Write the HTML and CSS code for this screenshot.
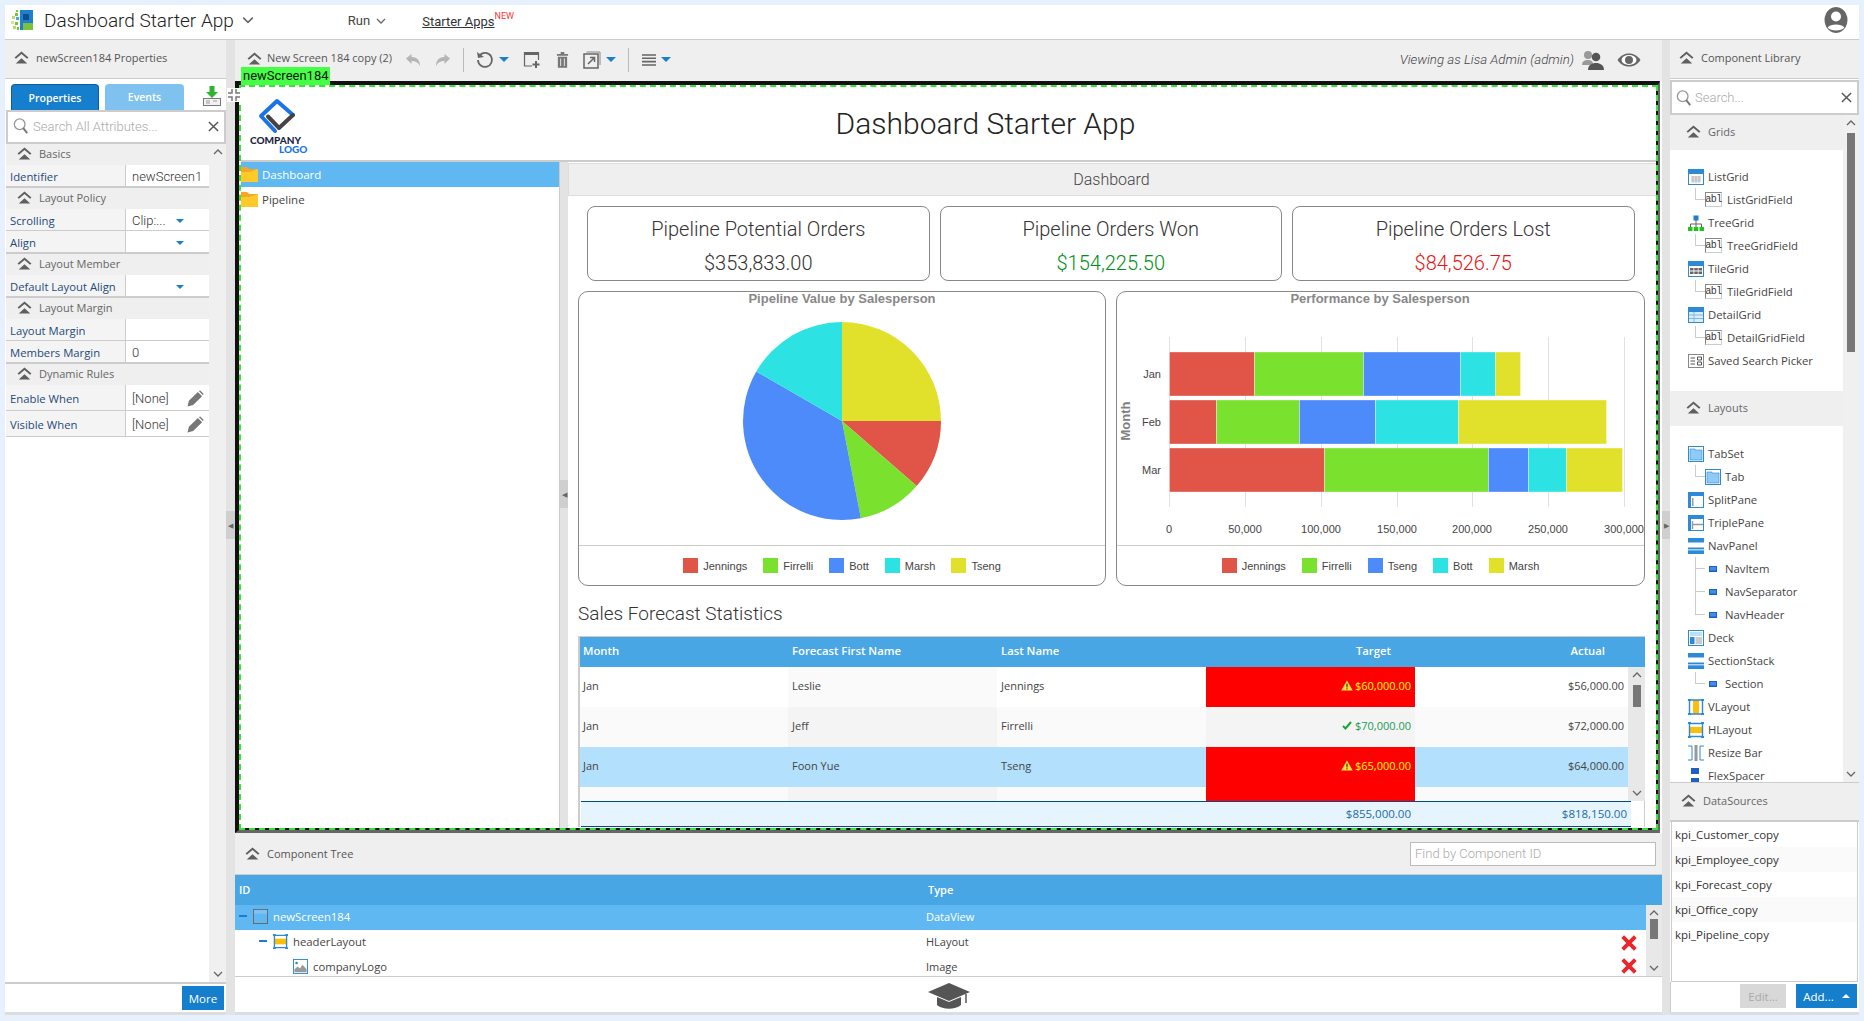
FILE: index.html
```html
<!DOCTYPE html>
<html lang="en">
<head>
<meta charset="utf-8">
<title>Dashboard Starter App</title>
<link rel="stylesheet" href="styles.css">
</head>
<body>
<svg class="defs" aria-hidden="true">
  <symbol id="i-sec" viewBox="0 0 16 14"><path d="M0.500 7 8 0.500 15.500 7 14 8.300 8 3.200 2 8.300Z M1.800 13.500 8 7.800 14.200 13.500Z" fill="#5f5f5f"/></symbol>
  <symbol id="i-search" viewBox="0 0 18 20"><circle cx="7.500" cy="8" r="6" fill="none" stroke="#999" stroke-width="1.500"/><path d="M11.500 12.500 16 18" stroke="#777" stroke-width="2.200" fill="none"/></symbol>
  <symbol id="i-x" viewBox="0 0 12 12"><path d="M1 1 11 11 M11 1 1 11" stroke="#555" stroke-width="1.600" fill="none"/></symbol>
  <symbol id="i-up" viewBox="0 0 10 6"><path d="M1 5 5 1 9 5" stroke="#666" stroke-width="1.300" fill="none"/></symbol>
  <symbol id="i-down" viewBox="0 0 10 6"><path d="M1 1 5 5 9 1" stroke="#666" stroke-width="1.300" fill="none"/></symbol>
  <symbol id="i-pencil" viewBox="0 0 18 18"><path d="M0.500 17.500 2 11.500 11.500 2 16 6.500 6.500 16Z M12.500 1 14 0.500 17.500 4 17 5.500Z" fill="#777"/></symbol>
  <symbol id="i-list" viewBox="0 0 16 16"><rect width="16" height="16" fill="#2c8ad6"/><rect x="1" y="5" width="14" height="10" fill="#fff"/><path d="M3 8h10M3 10h10M3 12h10M5 7v7M8 7v7M11 7v7" stroke="#aaa" stroke-width=".8"/></symbol>
  <symbol id="i-tree" viewBox="0 0 16 16"><rect x="5.500" y="0.500" width="5" height="5" fill="#1c7ed6"/><path d="M8 5v4M2.500 12V9h11v3M8 9v3" stroke="#666" fill="none"/><rect x="0" y="12" width="4.500" height="4" fill="#1fc41f"/><rect x="5.800" y="12" width="4.500" height="4" fill="#1fc41f"/><rect x="11.500" y="12" width="4.500" height="4" fill="#1fc41f"/></symbol>
  <symbol id="i-tile" viewBox="0 0 16 16"><rect width="16" height="16" fill="#2c8ad6"/><rect x="1" y="5" width="14" height="10" fill="#fff"/><path d="M2 7h3.500v2.500H2zM6.300 7h3.500v2.500H6.300zM10.500 7H14v2.500h-3.500zM2 10.500h3.500V13H2zM6.300 10.500h3.500V13H6.300zM10.500 10.500H14V13h-3.500z" fill="#666"/></symbol>
  <symbol id="i-detail" viewBox="0 0 16 16"><rect width="16" height="16" fill="#2c8ad6"/><rect x="1" y="5" width="14" height="10" fill="#dceefb"/><path d="M1 8h14M1 11.500h14M6 5v10" stroke="#7fb9e6"/></symbol>
  <symbol id="i-saved" viewBox="0 0 16 14"><rect x="0.500" y="0.500" width="15" height="13" fill="#fff" stroke="#888"/><path d="M2.500 4H7M2.500 7H7M2.500 10H7M9.500 3h4v3h-4zM9.500 8h4v3h-4z" stroke="#555" fill="none"/></symbol>
  <symbol id="i-tabset" viewBox="0 0 16 16"><rect x="0.500" y="0.500" width="15" height="15" fill="#fff" stroke="#2c8ad6"/><path d="M2 3h5v1h7v10H2z" fill="#8fcbf7" stroke="#2c8ad6" stroke-width=".6"/></symbol>
  <symbol id="i-split" viewBox="0 0 16 16"><rect x="0.500" y="0.500" width="15" height="15" fill="#fff" stroke="#2c8ad6"/><rect width="16" height="4" fill="#2c8ad6"/><rect width="3" height="16" fill="#2c8ad6"/><rect x="4" y="6" width="1.500" height="8" fill="#999"/></symbol>
  <symbol id="i-triple" viewBox="0 0 16 16"><rect x="0.500" y="0.500" width="15" height="15" fill="#fff" stroke="#2c8ad6"/><rect width="16" height="4" fill="#2c8ad6"/><rect width="3" height="16" fill="#2c8ad6"/><path d="M4.500 6v8M5 9.500h10" stroke="#999" stroke-width="1.400"/></symbol>
  <symbol id="i-nav" viewBox="0 0 16 16"><rect width="16" height="16" fill="#2c8ad6"/><rect y="4.500" width="16" height="5" fill="#fff"/><rect y="11" width="16" height="1.500" fill="#a9d4f5"/></symbol>
  <symbol id="i-dot" viewBox="0 0 8 6"><rect width="8" height="6" fill="#1d5fc4"/><rect x="1" y="1" width="6" height="3.500" fill="#3f8cec"/></symbol>
  <symbol id="i-deck" viewBox="0 0 16 16"><rect x="0.500" y="0.500" width="15" height="15" fill="#fff" stroke="#2c8ad6"/><rect x="2" y="2" width="12" height="4" fill="#bde0fa"/><rect x="2" y="7" width="4.500" height="7" fill="#2c8ad6"/><rect x="7.500" y="7" width="6.500" height="7" fill="#ccc"/></symbol>
  <symbol id="i-vlayout" viewBox="0 0 16 16"><rect x="5" y="1" width="6" height="14" fill="#fbbe0a"/><path d="M1.500 1h13M1.500 15h13M1.500 1v14M14.500 1v14" stroke="#2c8ad6" stroke-width="1.400" fill="none"/><path d="M0 0h3v2H0zM13 0h3v2h-3zM0 14h3v2H0zM13 14h3v2h-3z" fill="#2c8ad6"/></symbol>
  <symbol id="i-hlayout" viewBox="0 0 16 16"><rect x="1" y="5" width="14" height="6" fill="#fbbe0a"/><path d="M1 1.500h14M1 14.500h14M1.500 1v14M14.500 1v14" stroke="#2c8ad6" stroke-width="1.400" fill="none"/><path d="M0 0h3v2H0zM13 0h3v2h-3zM0 14h3v2H0zM13 14h3v2h-3z" fill="#2c8ad6"/></symbol>
  <symbol id="i-resize" viewBox="0 0 16 16"><path d="M0 1h4v14H0M16 1h-4v14h4" fill="none" stroke="#2c8ad6"/><rect x="6.500" y="0" width="3" height="16" fill="#999"/></symbol>
  <symbol id="i-flex" viewBox="0 0 16 16"><rect x="3" y="0" width="8" height="6" fill="#1d5fc4"/><rect x="3" y="10" width="8" height="6" fill="#1d5fc4"/></symbol>
  <symbol id="i-dv" viewBox="0 0 16 16"><rect x="0.500" y="0.500" width="15" height="15" fill="none" stroke="#666"/><rect x="1" y="1" width="14" height="4" fill="#7fc2f5"/></symbol>
  <symbol id="i-img" viewBox="0 0 16 16"><rect x="0.500" y="0.500" width="15" height="15" fill="#fff" stroke="#2c8ad6"/><path d="M1.500 14V11L5 8l2.500 2L10 6l4.500 5v3z" fill="#999"/><circle cx="3.800" cy="4.200" r="1.400" fill="#2c8ad6"/></symbol>
  <symbol id="i-redx" viewBox="0 0 14 14"><path d="M1.500 1.500 12.500 12.500 M12.500 1.500 1.500 12.500" stroke="#e8262b" stroke-width="3.400" fill="none"/></symbol>
  <symbol id="i-warn" viewBox="0 0 12 11"><path d="M6 0.500 11.800 10.500H0.200Z" fill="#ffdf3c"/><path d="M5.400 3.500h1.200v4H5.400zM5.400 8.200h1.200v1.200H5.400z" fill="#333"/></symbol>
  <symbol id="i-check" viewBox="0 0 10 9"><path d="M1 5 3.500 7.500 9 1" stroke="#18a53a" stroke-width="2" fill="none"/></symbol>
  <symbol id="i-folder" viewBox="0 0 17 15"><path d="M0 0h6l2 2h9v13H0z" fill="#f6a623"/><path d="M0 5h8l9-3v13H0z" fill="#fdca2a"/></symbol>
</svg>

<div class="app">
  <header class="topbar">
    <svg class="brand" viewBox="0 0 24 24">
      <rect x="10" y="2" width="13" height="20" fill="#1f7fcc"/><rect x="13" y="6" width="6" height="6" fill="#0f4f8f"/><rect x="13" y="15" width="10" height="7" fill="#7ac23c"/>
      <rect x="6" y="2" width="2" height="2" fill="#7ac23c"/><rect x="5" y="5" width="3" height="3" fill="#7ac23c"/><rect x="2" y="8" width="3" height="3" fill="#b7dc6c"/><rect x="6" y="9" width="3" height="3" fill="#47a6e3"/><rect x="1" y="13" width="3" height="3" fill="#d5e88f"/><rect x="5" y="14" width="3" height="3" fill="#7ac23c"/><rect x="3" y="18" width="3" height="3" fill="#b7dc6c"/><rect x="7" y="19" width="2" height="3" fill="#7ac23c"/>
    </svg>
    <span class="app-title">Dashboard Starter App</span>
    <svg class="chev-lg"><use href="#i-down"/></svg>
    <span class="menu">Run</span>
    <svg class="chev-sm"><use href="#i-down"/></svg>
    <span class="starter"><span class="starter-link">Starter Apps</span><sup class="new">NEW</sup></span>
    <svg class="avatar" viewBox="0 0 24 28"><path d="M12 1a11.500 13 0 1 0 .01 0Z" fill="#666"/><circle cx="12" cy="10.500" r="5" fill="#fff"/><path d="M3.500 21.500c3-4 14-4 17 0c-3 4-14 4-17 0Z" fill="#fff"/></svg>
  </header>

  <div class="workspace">
    <aside class="left">
      <div class="panel-head"><svg class="sec"><use href="#i-sec"/></svg>newScreen184 Properties</div>
      <div class="tabs">
        <div class="tab tab-on">Properties</div>
        <div class="tab tab-off">Events</div>
        <svg class="download" viewBox="0 0 18 20"><path d="M6.500 0h5v6H15L9 12 3 6h3.500z" fill="#2fb42f"/><rect x="0.500" y="12.500" width="17" height="7" fill="#f2f2f2" stroke="#777"/><path d="M3 15h4M3 17h4M10 15h4" stroke="#999"/></svg>
      </div>
      <div class="search"><svg class="search-ic"><use href="#i-search"/></svg><span class="placeholder">Search All Attributes...</span><svg class="search-x"><use href="#i-x"/></svg></div>
      <div class="props-wrap">
        <div class="props">
          <div class="sec-row"><svg class="sec"><use href="#i-sec"/></svg>Basics</div>
          <div class="prop end"><span class="lbl">Identifier</span><span class="val">newScreen1</span></div>
          <div class="sec-row"><svg class="sec"><use href="#i-sec"/></svg>Layout Policy</div>
          <div class="prop"><span class="lbl">Scrolling</span><span class="val">Clip:...<i class="tri"></i></span></div>
          <div class="prop end"><span class="lbl">Align</span><span class="val"><i class="tri"></i></span></div>
          <div class="sec-row"><svg class="sec"><use href="#i-sec"/></svg>Layout Member</div>
          <div class="prop end"><span class="lbl">Default Layout Align</span><span class="val"><i class="tri"></i></span></div>
          <div class="sec-row"><svg class="sec"><use href="#i-sec"/></svg>Layout Margin</div>
          <div class="prop"><span class="lbl">Layout Margin</span><span class="val"></span></div>
          <div class="prop end"><span class="lbl">Members Margin</span><span class="val">0</span></div>
          <div class="sec-row"><svg class="sec"><use href="#i-sec"/></svg>Dynamic Rules</div>
          <div class="prop tall"><span class="lbl">Enable When</span><span class="val">[None]<svg class="pencil"><use href="#i-pencil"/></svg></span></div>
          <div class="prop tall"><span class="lbl">Visible When</span><span class="val">[None]<svg class="pencil"><use href="#i-pencil"/></svg></span></div>
        </div>
        <div class="vbar vbar-left"><svg class="arrow"><use href="#i-up"/></svg><div class="grow"></div><svg class="arrow"><use href="#i-down"/></svg></div>
      </div>
      <div class="foot"><span class="btn">More</span></div>
    </aside>

    <div class="split"><span class="handle">◀</span></div>

    <main class="main">
      <div class="toolbar">
        <svg class="sec sec-tb"><use href="#i-sec"/></svg>
        <span class="tb-title">New Screen 184 copy (2)</span>
        <svg class="tool t-undo" viewBox="0 0 16 14"><path d="M1 5.500 6.500 1v3c5 0 8.500 3 8.500 9-1.500-3.500-4.500-5-8.500-5v3z" fill="#b5b5b5"/></svg>
        <svg class="tool t-redo" viewBox="0 0 16 14"><path d="M15 5.500 9.500 1v3c-5 0-8.500 3-8.500 9 1.500-3.500 4.500-5 8.500-5v3z" fill="#b5b5b5"/></svg>
        <i class="tb-sep"></i>
        <svg class="tool t-refresh" viewBox="0 0 18 18"><path d="M4 4a7 7 0 1 1-2 5" fill="none" stroke="#666" stroke-width="1.800"/><path d="M1 1l1 6 6-1z" fill="#666"/></svg>
        <i class="tri tri-tb"></i>
        <svg class="tool t-new" viewBox="0 0 18 18"><path d="M1 1h15v3H1z" fill="#666"/><path d="M1.500 1v14H9M15.500 1v8" fill="none" stroke="#666" stroke-width="1.200"/><path d="M13 10v7M9.500 13.500h7" stroke="#666" stroke-width="2"/></svg>
        <svg class="tool t-trash" viewBox="0 0 14 18"><path d="M1 3h12v2H1zM5 1h4v2H5zM2 6h10v12H2z" fill="#777"/><path d="M5 8v8M9 8v8" stroke="#eee"/></svg>
        <svg class="tool t-export" viewBox="0 0 18 18"><path d="M1 3h14v14H1z" fill="none" stroke="#666" stroke-width="1.500"/><path d="M3.500 1H17v13" fill="none" stroke="#888"/><path d="M5 13 11 7M7 6.500h4.500V11" stroke="#666" stroke-width="1.500" fill="none"/></svg>
        <i class="tri tri-tb"></i>
        <i class="tb-sep sep-b"></i>
        <svg class="tool t-menu" viewBox="0 0 14 12"><path d="M0 1h14M0 4.300h14M0 7.600h14M0 11h14" stroke="#666" stroke-width="1.600"/></svg>
        <i class="tri tri-tb"></i>
        <span class="viewing">Viewing as Lisa Admin (admin)</span>
        <svg class="tool t-users" viewBox="0 0 22 20"><circle cx="6" cy="5" r="4" fill="#999"/><path d="M0 15c0-4 3-5 6-5s4 1 5 3v2z" fill="#999"/><circle cx="14" cy="7" r="4.300" fill="#555"/><path d="M6 20c0-5 4-7 8-7s8 2 8 7z" fill="#555"/></svg>
        <svg class="tool t-eye" viewBox="0 0 24 14"><path d="M0.500 7C4 2 8 0.500 12 0.500S20 2 23.500 7C20 12 16 13.500 12 13.500S4 12 0.500 7Z" fill="#666"/><ellipse cx="12" cy="7" rx="7.500" ry="5" fill="#fff"/><circle cx="12" cy="7" r="4" fill="#666"/></svg>
      </div>

      <div class="canvas">
        <span class="tag">newScreen184</span>
        <svg class="corners" viewBox="0 0 14 14"><path d="M5 1v4H1 M9 1v4h4 M1 9h4v4 M13 9H9v4" fill="none" stroke="#777" stroke-width="1.500"/></svg>
        <div class="canvas-in">
          <div class="dash-head">
            <div class="logo">
              <svg class="logo-mark" viewBox="0 0 40 40"><path d="M36 17 20 3 4 18 18 33" fill="none" stroke="#1a73e8" stroke-width="4" stroke-linejoin="round" stroke-linecap="round"/><path d="M11 18.500 22 30 36 17" fill="none" stroke="#444" stroke-width="4" stroke-linejoin="round" stroke-linecap="round"/></svg>
              <span class="logo-a">COMPANY</span>
              <span class="logo-b">LOGO</span>
            </div>
            <h1 class="dash-title">Dashboard Starter App</h1>
          </div>
          <div class="dash-body">
            <nav class="nav">
              <div class="nav-row nav-on"><svg class="folder"><use href="#i-folder"/></svg>Dashboard</div>
              <div class="nav-row"><svg class="folder"><use href="#i-folder"/></svg>Pipeline</div>
            </nav>
            <div class="split split-in"><span class="handle">◀</span></div>
            <section class="content">
              <div class="content-head">Dashboard</div>
              <div class="kpis">
                <div class="kpi"><div class="kpi-t">Pipeline Potential Orders</div><div class="kpi-v">$353,833.00</div></div>
                <div class="kpi"><div class="kpi-t">Pipeline Orders Won</div><div class="kpi-v won">$154,225.50</div></div>
                <div class="kpi"><div class="kpi-t">Pipeline Orders Lost</div><div class="kpi-v lost">$84,526.75</div></div>
              </div>
              <div class="charts">
                <div class="chart">
                  <svg class="plot" viewBox="0 0 526 253">
                    <text class="c-title" x="263" y="11">Pipeline Value by Salesperson</text>
                    <path d="M263 129V30A99 99 0 0 1 362 129Z" fill="#e1e12b"/>
                    <path d="M263 129H362A99 99 0 0 1 337.700 194Z" fill="#e05547"/>
                    <path d="M263 129L337.700 194A99 99 0 0 1 281.900 226.200Z" fill="#7ae22e"/>
                    <path d="M263 129L281.900 226.200A99 99 0 0 1 177.300 79.500Z" fill="#4d8afa"/>
                    <path d="M263 129L177.300 79.500A99 99 0 0 1 263 30Z" fill="#2de2e2"/>
                  </svg>
                  <div class="legend">
                    <span class="lg"><i class="sw s-red"></i>Jennings</span>
                    <span class="lg"><i class="sw s-green"></i>Firrelli</span>
                    <span class="lg"><i class="sw s-blue"></i>Bott</span>
                    <span class="lg"><i class="sw s-cyan"></i>Marsh</span>
                    <span class="lg"><i class="sw s-yellow"></i>Tseng</span>
                  </div>
                </div>
                <div class="chart">
                  <svg class="plot" viewBox="0 0 527 253">
                    <text class="c-title" x="263" y="11">Performance by Salesperson</text>
                    <path class="grid-l" d="M52.500 45V215M128.500 45V215M204.500 45V215M280.500 45V215M355.500 45V215M431.500 45V215M507.500 45V215"/>
                    <g class="bars">
                      <rect x="52.500" y="60" width="85" height="44" fill="#e05547"/><rect x="137.500" y="60" width="109" height="44" fill="#7ae22e"/><rect x="246.500" y="60" width="97" height="44" fill="#4d8afa"/><rect x="343.500" y="60" width="35" height="44" fill="#2de2e2"/><rect x="378.500" y="60" width="25" height="44" fill="#e1e12b"/>
                      <rect x="52.500" y="108" width="47" height="44" fill="#e05547"/><rect x="99.500" y="108" width="83" height="44" fill="#7ae22e"/><rect x="182.500" y="108" width="76" height="44" fill="#4d8afa"/><rect x="258.500" y="108" width="83" height="44" fill="#2de2e2"/><rect x="341.500" y="108" width="148" height="44" fill="#e1e12b"/>
                      <rect x="52.500" y="156" width="155" height="44" fill="#e05547"/><rect x="207.500" y="156" width="164" height="44" fill="#7ae22e"/><rect x="371.500" y="156" width="40" height="44" fill="#4d8afa"/><rect x="411.500" y="156" width="38" height="44" fill="#2de2e2"/><rect x="449.500" y="156" width="56" height="44" fill="#e1e12b"/>
                    </g>
                    <text class="ax ax-r" x="44" y="86">Jan</text><text class="ax ax-r" x="44" y="134">Feb</text><text class="ax ax-r" x="44" y="182">Mar</text>
                    <text class="c-axis" transform="translate(13 129) rotate(-90)">Month</text>
                    <text class="ax ax-m" x="52" y="241">0</text><text class="ax ax-m" x="128" y="241">50,000</text><text class="ax ax-m" x="204" y="241">100,000</text><text class="ax ax-m" x="280" y="241">150,000</text><text class="ax ax-m" x="355" y="241">200,000</text><text class="ax ax-m" x="431" y="241">250,000</text><text class="ax ax-m" x="507" y="241">300,000</text>
                  </svg>
                  <div class="legend">
                    <span class="lg"><i class="sw s-red"></i>Jennings</span>
                    <span class="lg"><i class="sw s-green"></i>Firrelli</span>
                    <span class="lg"><i class="sw s-blue"></i>Tseng</span>
                    <span class="lg"><i class="sw s-cyan"></i>Bott</span>
                    <span class="lg"><i class="sw s-yellow"></i>Marsh</span>
                  </div>
                </div>
              </div>
              <h2 class="stats-title">Sales Forecast Statistics</h2>
              <div class="sales">
                <div class="s-head"><span>Month</span><span>Forecast First Name</span><span>Last Name</span><span class="h-target">Target</span><span class="h-actual">Actual</span></div>
                <div class="s-body">
                  <div class="s-rows">
                    <div class="s-row"><span>Jan</span><span class="alt">Leslie</span><span>Jennings</span><span class="num bad"><svg class="warn"><use href="#i-warn"/></svg>$60,000.00</span><span class="num">$56,000.00</span></div>
                    <div class="s-row even"><span>Jan</span><span class="alt">Jeff</span><span>Firrelli</span><span class="num good alt"><svg class="check"><use href="#i-check"/></svg>$70,000.00</span><span class="num">$72,000.00</span></div>
                    <div class="s-row sel"><span>Jan</span><span>Foon Yue</span><span>Tseng</span><span class="num bad"><svg class="warn"><use href="#i-warn"/></svg>$65,000.00</span><span class="num">$64,000.00</span></div>
                    <div class="s-row even cut"><span></span><span class="alt"></span><span></span><span class="bad"></span><span></span></div>
                  </div>
                  <div class="vbar vbar-s"><svg class="arrow"><use href="#i-up"/></svg><div class="thumb th-s"></div><div class="grow"></div><svg class="arrow"><use href="#i-down"/></svg></div>
                </div>
                <div class="s-sum"><div class="s-sum-in"><span></span><span></span><span></span><span class="num">$855,000.00</span><span class="num">$818,150.00</span></div></div>
              </div>
            </section>
          </div>
        </div>
      </div>

      <section class="tree-panel">
        <div class="tree-head"><svg class="sec"><use href="#i-sec"/></svg>Component Tree<span class="find">Find by Component ID</span></div>
        <div class="t-head"><span>ID</span><span>Type</span></div>
        <div class="t-body">
          <div class="t-rows">
            <div class="t-row t-on"><span class="t-id"><i class="dash"></i><svg class="t-ic"><use href="#i-dv"/></svg>newScreen184</span><span class="t-type">DataView</span></div>
            <div class="t-row"><span class="t-id lvl1"><i class="dash"></i><svg class="t-ic"><use href="#i-hlayout"/></svg>headerLayout</span><span class="t-type">HLayout</span><svg class="redx"><use href="#i-redx"/></svg></div>
            <div class="t-row t-cut"><span class="t-id lvl2"><svg class="t-ic"><use href="#i-img"/></svg>companyLogo</span><span class="t-type">Image</span><svg class="redx"><use href="#i-redx"/></svg></div>
          </div>
          <div class="vbar vbar-t"><svg class="arrow"><use href="#i-up"/></svg><div class="thumb th-t"></div><div class="grow"></div><svg class="arrow"><use href="#i-down"/></svg></div>
        </div>
        <div class="tree-foot">
          <svg class="cap" viewBox="0 0 44 28"><path d="M22 1 43 10 22 19 1 10Z" fill="#555"/><path d="M10 15v8c6 5 18 5 24 0v-8l-12 5z" fill="#555"/><path d="M39 12v9" stroke="#555" stroke-width="1.500"/></svg>
        </div>
      </section>
    </main>

    <div class="split split-r"><span class="handle">▶</span></div>

    <aside class="right">
      <div class="panel-head"><svg class="sec"><use href="#i-sec"/></svg>Component Library</div>
      <div class="search search-r"><svg class="search-ic"><use href="#i-search"/></svg><span class="placeholder">Search...</span><svg class="search-x"><use href="#i-x"/></svg></div>
      <div class="lib-wrap">
        <div class="lib">
          <div class="lib-sec"><svg class="sec"><use href="#i-sec"/></svg>Grids</div>
          <div class="lib-list">
            <div class="it"><svg class="ic"><use href="#i-list"/></svg>ListGrid</div>
            <div class="it sub"><i class="conn"></i><b class="abl">abl</b>ListGridField</div>
            <div class="it"><svg class="ic"><use href="#i-tree"/></svg>TreeGrid</div>
            <div class="it sub"><i class="conn"></i><b class="abl">abl</b>TreeGridField</div>
            <div class="it"><svg class="ic"><use href="#i-tile"/></svg>TileGrid</div>
            <div class="it sub"><i class="conn"></i><b class="abl">abl</b>TileGridField</div>
            <div class="it"><svg class="ic"><use href="#i-detail"/></svg>DetailGrid</div>
            <div class="it sub"><i class="conn"></i><b class="abl">abl</b>DetailGridField</div>
            <div class="it"><svg class="ic"><use href="#i-saved"/></svg>Saved Search Picker</div>
          </div>
          <div class="lib-sec"><svg class="sec"><use href="#i-sec"/></svg>Layouts</div>
          <div class="lib-list list-b">
            <div class="it"><svg class="ic"><use href="#i-tabset"/></svg>TabSet</div>
            <div class="it sub"><i class="conn"></i><svg class="ic ic-s"><use href="#i-tabset"/></svg>Tab</div>
            <div class="it"><svg class="ic"><use href="#i-split"/></svg>SplitPane</div>
            <div class="it"><svg class="ic"><use href="#i-triple"/></svg>TriplePane</div>
            <div class="it"><svg class="ic"><use href="#i-nav"/></svg>NavPanel</div>
            <div class="it sub"><i class="conn conn-d"></i><svg class="dot"><use href="#i-dot"/></svg>NavItem</div>
            <div class="it sub"><i class="conn conn-d"></i><svg class="dot"><use href="#i-dot"/></svg>NavSeparator</div>
            <div class="it sub"><i class="conn"></i><svg class="dot"><use href="#i-dot"/></svg>NavHeader</div>
            <div class="it"><svg class="ic"><use href="#i-deck"/></svg>Deck</div>
            <div class="it"><svg class="ic"><use href="#i-nav"/></svg>SectionStack</div>
            <div class="it sub"><i class="conn"></i><svg class="dot"><use href="#i-dot"/></svg>Section</div>
            <div class="it"><svg class="ic"><use href="#i-vlayout"/></svg>VLayout</div>
            <div class="it"><svg class="ic"><use href="#i-hlayout"/></svg>HLayout</div>
            <div class="it"><svg class="ic"><use href="#i-resize"/></svg>Resize Bar</div>
            <div class="it"><svg class="ic"><use href="#i-flex"/></svg>FlexSpacer</div>
          </div>
        </div>
        <div class="vbar vbar-r"><svg class="arrow"><use href="#i-up"/></svg><div class="thumb th-r"></div><div class="grow"></div><svg class="arrow"><use href="#i-down"/></svg></div>
      </div>
      <div class="ds-head"><svg class="sec"><use href="#i-sec"/></svg>DataSources</div>
      <div class="ds-list">
        <div class="ds">kpi_Customer_copy</div>
        <div class="ds">kpi_Employee_copy</div>
        <div class="ds">kpi_Forecast_copy</div>
        <div class="ds">kpi_Office_copy</div>
        <div class="ds">kpi_Pipeline_copy</div>
      </div>
      <div class="ds-foot"><span class="btn btn-off">Edit...</span><span class="btn btn-add">Add...<i class="tri-up"></i></span></div>
    </aside>
  </div>
</div>
</body>
</html>
```

FILE: styles.css
```css
* { box-sizing: border-box; }
html, body { margin: 0; height: 100%; }
body { background: #e6f1fd; padding: 5px; font: 12px "Open Sans", sans-serif; color: #444; overflow: hidden; }
.defs { position: absolute; width: 0; height: 0; }
.app { width: 1854px; height: 1010px; display: flex; flex-direction: column; }

/* top bar */
.topbar { height: 35px; background: #fff; border-bottom: 1px solid #ccc; display: flex; align-items: center; padding: 0 0 4px 5px; flex: none; }
.brand { width: 24px; height: 24px; margin-right: 10px; }
.app-title { font: 300 19px Roboto, sans-serif; color: #222; }
.chev-lg { width: 12px; height: 8px; margin-left: 8px; }
.menu { font: 13px Roboto, sans-serif; color: #444; margin-left: 94px; }
.chev-sm { width: 10px; height: 6px; margin-left: 6px; margin-top: 2px; }
.starter { margin-left: 36px; font: 13px Roboto, sans-serif; color: #333; padding-top: 2px; }
.starter-link { text-decoration: underline; }
.new { font-size: 9px; color: #f33; vertical-align: 7px; line-height: 0; }
.avatar { width: 24px; height: 28px; margin-left: auto; margin-right: 11px; }

.workspace { flex: 1; display: flex; min-height: 0; }
.split { width: 9px; flex: none; background: #e3e3e3; display: flex; align-items: center; justify-content: center; padding-bottom: 5px; }
.split-r { width: 8px; }
.handle { width: 100%; height: 28px; background: #cfcfcf; color: #666; font-size: 7px; display: flex; align-items: center; justify-content: center; overflow: hidden; }

/* side panels */
.left, .right { background: #fff; display: flex; flex-direction: column; flex: none; border-bottom: 3px solid #ddd; }
.left { width: 221px; }
.right { width: 189px; }
.panel-head { height: 39px; flex: none; background: #efefef; border-bottom: 1px solid #ccc; display: flex; align-items: center; padding: 0 0 3px 9px; font-size: 11px; color: #555; }
.sec { width: 15px; height: 13px; margin-right: 7px; flex: none; }
.tabs { height: 31px; flex: none; display: flex; align-items: flex-end; padding-left: 6px; gap: 6px; background: #fff; }
.tab { height: 26px; border-radius: 4px 4px 0 0; color: #fff; font-size: 10.500px; font-weight: 600; display: flex; align-items: center; justify-content: center; }
.tab-on { width: 88px; background: #167fcd; border: 1px solid #0f5f9f; border-bottom: 0; }
.tab-off { width: 79px; background: #7fc1ef; }
.download { width: 18px; height: 20px; margin: 0 0 4px 13px; }
.search { height: 34px; flex: none; margin-left: 1px; border: 2px solid #ccc; background: #fff; display: flex; align-items: center; padding: 0 5px 2px 5px; }
.search-ic { width: 16px; height: 18px; margin-right: 4px; flex: none; }
.placeholder { font: 300 13px Roboto, sans-serif; color: #aaa; flex: 1; }
.search-x { width: 11px; height: 11px; flex: none; }
.props-wrap { flex: 1; display: flex; min-height: 0; }
.props { width: 203px; margin-left: 1px; flex: none; }
.sec-row { height: 21px; background: #efefef; display: flex; align-items: center; padding: 0 0 2px 11px; font-size: 11px; color: #666; }
.prop { height: 22px; display: grid; grid-template-columns: 120px 83px; border-bottom: 1px solid #ccc; }
.prop.end { height: 23px; border-bottom-width: 2px; }
.prop.tall { height: 26px; }
.lbl { background: #f4f4f4; border-right: 1px solid #ccc; color: #1e4a7a; font-size: 11.300px; display: flex; align-items: center; padding: 2px 0 0 4px; white-space: nowrap; }
.val { font: 300 13px Roboto, sans-serif; color: #333; display: flex; align-items: center; padding: 2px 0 0 6px; position: relative; white-space: nowrap; }
.tri { width: 0; height: 0; border: 4px solid transparent; border-top: 4px solid #1a80cc; border-bottom: 0; position: absolute; right: 25px; top: 10px; }
.pencil { width: 17px; height: 17px; position: absolute; right: 5px; top: 5px; }
.foot { height: 30px; flex: none; border-top: 2px solid #ccc; display: flex; justify-content: flex-end; align-items: center; padding-right: 2px; }
.btn { height: 24px; width: 42px; background: #167fcd; color: #fff; font-size: 11.500px; display: flex; align-items: center; justify-content: center; }

.vbar { flex: none; display: flex; flex-direction: column; align-items: center; background: #f0f0f0; padding: 5px 0; }
.grow { flex: 1; }
.arrow { width: 10px; height: 6px; flex: none; }
.thumb { width: 8px; background: #777; flex: none; }
.vbar-left { width: 17px; }

/* main */
.main { width: 1427px; flex: none; display: flex; flex-direction: column; background: #fff; border-bottom: 3px solid #ddd; }
.toolbar { height: 41px; flex: none; background: #efefef; display: flex; align-items: center; padding: 0 6px 2px 12px; }
.sec-tb { margin-bottom: 3px; margin-right: 8px; }
.tb-title { font-size: 11px; color: #555; margin: 0 0 5px -3px; width: 137px; }
.tool { flex: none; }
.tb-sep { width: 1px; height: 24px; background: #bbb; margin: 0 12px 0 12px; flex: none; }
.sep-b { margin: 0 12px 0 12px; }
.t-undo { width: 16px; height: 14px; margin-left: 1px; }
.t-redo { width: 16px; height: 14px; margin-left: 14px; }
.t-refresh { width: 18px; height: 18px; }
.tri-tb { position: static; margin-left: 5px; flex: none; border-width: 5px; border-top-width: 5px; border-bottom: 0; }
.t-new { width: 18px; height: 18px; margin-left: 14px; }
.t-trash { width: 13px; height: 17px; margin-left: 15px; }
.t-export { width: 18px; height: 18px; margin-left: 14px; }
.t-menu { width: 14px; height: 12px; margin-left: 1px; }
.viewing { margin-left: auto; font: italic 300 13.300px Roboto, sans-serif; color: #444; }
.t-users { width: 22px; height: 20px; margin-left: 8px; }
.t-eye { width: 24px; height: 14px; margin: 0 15px 0 13px; }

.canvas { height: 752px; width: 1425px; flex: none; position: relative; border-style: solid; border-color: #111 #666 #666 #111; border-width: 4px 2px 3px 4px; }
.tag { position: absolute; left: 2px; top: -18px; height: 18px; width: 89px; background: #44ff44; font: 13px Roboto, sans-serif; color: #111; padding-left: 2px; line-height: 18px; z-index: 2; }
.corners { position: absolute; left: -12px; top: 3px; width: 14px; height: 14px; background: #fff; z-index: 2; }
.canvas-in { height: 100%; border: 2px dashed #3be23b; background: linear-gradient(#fff, #fff) no-repeat left top / calc(100% - 2px) calc(100% - 2px), #111; background-origin: border-box; display: flex; flex-direction: column; }
.dash-head { height: 75px; flex: none; border-bottom: 2px solid #ccc; position: relative; display: flex; align-items: center; justify-content: center; }
.dash-title { margin: 0; font: 300 30px Roboto, sans-serif; color: #222; padding-left: 74px; }
.logo { position: absolute; left: 8px; top: 7px; width: 60px; height: 66px; }
.logo-mark { width: 40px; height: 40px; position: absolute; left: 8px; top: 4px; }
.logo-a { position: absolute; left: 1px; top: 40px; font: 900 10px Lato, sans-serif; color: #1c2540; }
.logo-b { position: absolute; left: 30px; top: 49px; font: 900 10px Lato, sans-serif; color: #1a73e8; }

.dash-body { flex: 1; display: flex; min-height: 0; }
.nav { width: 319px; flex: none; border-right: 1px solid #ccc; }
.nav-row { height: 25px; display: flex; align-items: center; font-size: 11.500px; color: #444; }
.nav-on { background: #60b8f2; color: #fff; }
.folder { width: 17px; height: 15px; margin-right: 4px; }
.split-in { width: 8px; padding-bottom: 2px; }
.content { flex: 1; min-width: 0; display: flex; flex-direction: column; }
.content-head { height: 33px; flex: none; margin-top: 1px; background: #efefef; border: 1px solid #ddd; border-right: 0; display: flex; align-items: center; justify-content: center; font: 300 16px Roboto, sans-serif; color: #444; padding-right: 2px; }
.kpis { display: grid; grid-template-columns: 342.500px 342.500px 342.500px; gap: 10px; padding: 10px 0 0 19px; flex: none; }
.kpi { height: 75px; border: 1px solid #888; border-radius: 8px; text-align: center; font: 300 20px Roboto, sans-serif; color: #333; padding-top: 10px; }
.kpi-v { margin-top: 10px; }
.won { color: #009020; }
.lost { color: #ee1111; }
.charts { display: grid; grid-template-columns: 528px 529px; gap: 10px; padding: 10px 0 0 10px; flex: none; }
.chart { height: 295px; border: 1px solid #888; border-radius: 10px; overflow: hidden; }
.plot { display: block; width: 100%; height: 253px; }
.legend { height: 40px; border-top: 1px solid #ccc; display: flex; align-items: center; justify-content: center; gap: 16px; font: 11px "Liberation Sans", sans-serif; color: #444; }
.lg { display: flex; align-items: center; }
.sw { width: 15px; height: 15px; margin-right: 5px; }
.s-red { background: #e05547; } .s-green { background: #7ae22e; } .s-blue { background: #4d8afa; } .s-cyan { background: #2de2e2; } .s-yellow { background: #e1e12b; }
.c-title { font: 700 13px "Liberation Sans", sans-serif; fill: #888; text-anchor: middle; }
.c-axis { font: 700 13px "Liberation Sans", sans-serif; fill: #808080; text-anchor: middle; }
.ax { font: 11px "Liberation Sans", sans-serif; fill: #444; }
.ax-r { text-anchor: end; }
.ax-m { text-anchor: middle; }
.grid-l { stroke: #e0e0e0; fill: none; }
.bars rect { stroke: rgba(255, 255, 255, .35); }
.stats-title { margin: 15px 0 9px 10px; font: 300 19px Roboto, sans-serif; color: #333; height: 26px; line-height: 26px; flex: none; }
.sales { margin-left: 10px; width: 1067px; flex: none; border-left: 2px solid #ccc; }
.s-head { height: 31px; background: #47a6e3; border-top: 1px solid #ccc; display: grid; grid-template-columns: 208px 209px 209px 209px 1fr; align-items: center; color: #fff; font-size: 11.300px; font-weight: 600; padding-bottom: 4px; }
.s-head span { padding-left: 3px; }
.s-head span + span { padding-left: 4px; }
.s-head .h-target { text-align: right; padding-right: 24px; }
.s-head .h-actual { text-align: right; padding-right: 40px; }
.s-body { height: 134px; display: flex; }
.s-rows { width: 1048px; flex: none; }
.s-row { height: 40px; display: grid; grid-template-columns: 208px 209px 209px 209px 1fr; font-size: 11px; color: #444; background: #fff; }
.s-row span { display: flex; align-items: center; padding: 0 0 4px 4px; }
.s-row span:first-child { padding-left: 3px; }
.alt { background: #fafafa; }
.even { background: #fafafa; }
.even .alt { background: #f4f4f4; }
.sel { background: #b3e1fd; }
.cut { height: 14px; }
.s-row .num { justify-content: flex-end; padding: 0 4px 4px 0; }
.s-row .bad { background: #ff0000; color: #ffff00; }
.s-row .good { color: #1a9a55; }
.warn { width: 12px; height: 11px; margin-right: 2px; }
.check { width: 10px; height: 9px; margin-right: 3px; }
.vbar-s { width: 17px; background: #e8e8e8; }
.th-s { height: 22px; margin-top: 7px; }
.s-sum { height: 26px; border-right: 1px solid #ccc; }
.s-sum-in { width: 1050px; height: 26px; margin-left: 1px; background: #e6f4fe; border-top: 1px solid #024a8a; border-bottom: 1px solid #024a8a; display: grid; grid-template-columns: 207px 209px 209px 209px 1fr; font-size: 11.500px; color: #1a6aa8; }
.s-sum-in .num { display: flex; align-items: center; justify-content: flex-end; padding: 0 4px 1px 0; }

/* tree */
.tree-panel { flex: 1; display: flex; flex-direction: column; min-height: 0; }
.tree-head { height: 42px; flex: none; background: #efefef; border-bottom: 1px solid #ccc; display: flex; align-items: center; padding: 0 6px 0 10px; font-size: 11px; color: #555; }
.find { margin-left: auto; width: 246px; height: 24px; border: 1px solid #bbb; background: #fff; font: 300 13px Roboto, sans-serif; color: #aaa; display: flex; align-items: center; padding-left: 4px; }
.t-head { height: 30px; flex: none; background: #47a6e3; display: grid; grid-template-columns: 689px 1fr; align-items: center; color: #fff; font-size: 11px; font-weight: 600; padding: 0 0 2px 4px; }
.t-body { height: 72px; flex: none; display: flex; border-bottom: 1px solid #ccc; }
.t-rows { width: 1411px; flex: none; overflow: hidden; }
.t-row { height: 25px; display: grid; grid-template-columns: 691px 1fr 20px; align-items: center; padding-right: 5px; font-size: 11px; color: #444; }
.t-on { background: #60b8f2; color: #fff; }
.t-cut { height: 22px; }
.t-id { display: flex; align-items: center; font-size: 11.300px; padding: 0 0 3px 4px; }
.t-type { padding-bottom: 3px; }
.t-cut .t-id, .t-cut .t-type { padding-bottom: 0; }
.lvl1 { padding-left: 24px; }
.lvl2 { padding-left: 58px; }
.dash { width: 8px; height: 1.500px; background: #1a80cc; margin-right: 6px; flex: none; }
.t-ic { width: 15px; height: 15px; margin-right: 5px; flex: none; }
.redx { width: 16px; height: 16px; }
.vbar-t { width: 16px; background: #e8e8e8; }
.th-t { height: 20px; margin-top: 3px; }
.tree-foot { flex: 1; display: flex; align-items: center; justify-content: center; }
.cap { width: 44px; height: 28px; margin-top: 2px; margin-left: 1px; }

/* library */
.search-r { margin: 1px 0 0 0; height: 35px; padding: 0 5px 0 4px; }
.search-r .search-ic { margin-right: 3px; }
.lib-wrap { height: 667px; flex: none; display: flex; overflow: hidden; }
.lib { width: 173px; flex: none; overflow: hidden; }
.lib-sec { height: 35px; background: #efefef; display: flex; align-items: center; padding: 0 0 2px 16px; font-size: 11px; color: #666; }
.lib-list { padding-top: 15px; padding-bottom: 19px; }
.list-b { padding-top: 16px; }
.it { height: 23px; display: flex; align-items: center; font-size: 11.300px; line-height: 14px; color: #444; padding-left: 18px; white-space: nowrap; }
.ic { width: 16px; height: 16px; margin-right: 4px; flex: none; }
.it.sub { padding-left: 25px; }
.conn { width: 10px; height: 23px; flex: none; background: linear-gradient(#ccc, #ccc) left top / 1px 12px no-repeat, linear-gradient(#ccc, #ccc) left 11px / 10px 1px no-repeat; }
.conn-d { background: linear-gradient(#ccc, #ccc) left top / 1px 23px no-repeat, linear-gradient(#ccc, #ccc) left 11px / 10px 1px no-repeat; }
.abl { width: 17px; height: 15px; border: 1px solid #888; border-right-color: #ccc; border-bottom-color: #ccc; font: 10px "Liberation Mono", monospace; color: #333; display: flex; align-items: center; justify-content: center; margin-right: 5px; flex: none; letter-spacing: -.5px; }
.ic-s { margin-right: 4px; }
.dot { width: 8px; height: 6px; margin: 0 8px 0 4px; flex: none; }
.vbar-r { width: 16px; background: #f0f0f0; }
.th-r { height: 219px; margin-top: 7px; }
.ds-head { height: 40px; flex: none; background: #efefef; border-top: 1px solid #ccc; border-bottom: 2px solid #ccc; display: flex; align-items: center; padding: 0 0 2px 11px; font-size: 11px; color: #666; }
.ds-list { height: 160px; flex: none; margin: 0 1px; border: 1px solid #ccc; border-top: 0; }
.ds { height: 25px; display: flex; align-items: center; padding-left: 3px; font-size: 11.500px; color: #333; }
.ds:nth-child(even) { background: #fafafa; }
.ds-foot { flex: 1; display: flex; justify-content: flex-end; align-items: center; gap: 10px; padding: 0 2px 2px 0; border-left: 1px solid #ccc; }
.btn-off { width: 46px; background: #d8d8d8; color: #aaa; }
.btn-add { width: 61px; gap: 8px; }
.tri-up { width: 0; height: 0; border: 4px solid transparent; border-bottom: 4px solid #fff; border-top: 0; }
```
